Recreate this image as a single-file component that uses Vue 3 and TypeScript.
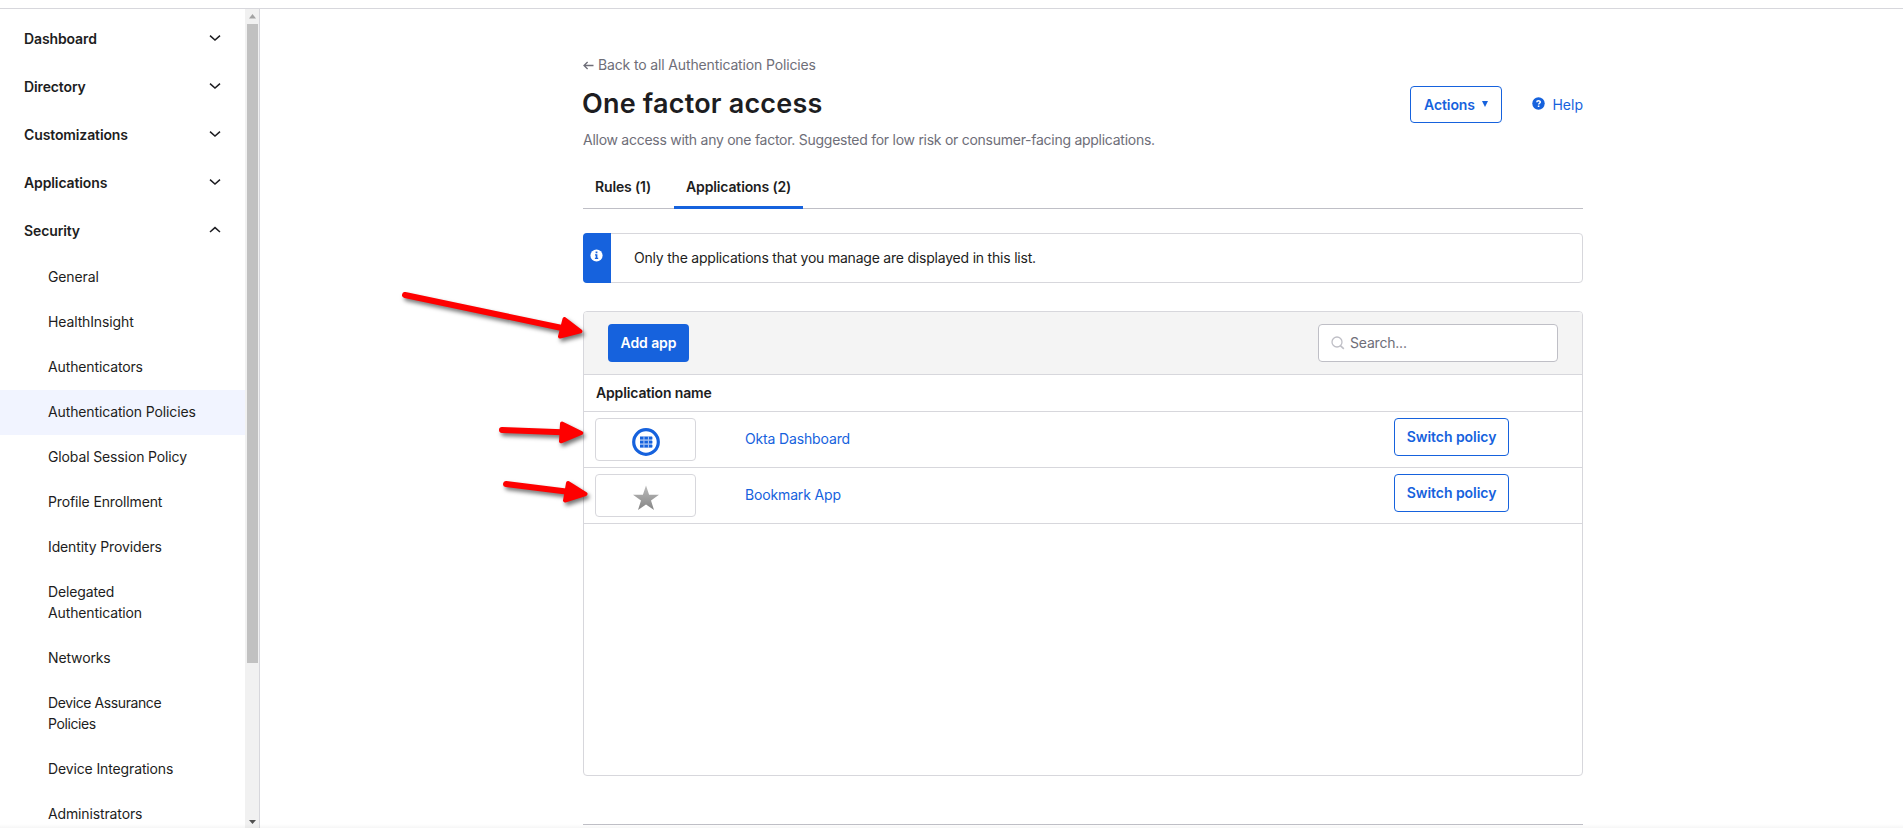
<script setup lang="ts">
interface Section { label: string; open?: boolean }
interface Item { label: string; active?: boolean; tight?: boolean }
interface AppRow { name: string; icon: 'dashboard' | 'star' }

const sections: Section[] = [
  { label: 'Dashboard' },
  { label: 'Directory' },
  { label: 'Customizations' },
  { label: 'Applications' },
  { label: 'Security', open: true },
]
const items: Item[] = [
  { label: 'General' },
  { label: 'HealthInsight' },
  { label: 'Authenticators' },
  { label: 'Authentication Policies', active: true },
  { label: 'Global Session Policy' },
  { label: 'Profile Enrollment' },
  { label: 'Identity Providers' },
  { label: 'Delegated Authentication' },
  { label: 'Networks' },
  { label: 'Device Assurance Policies', tight: true },
  { label: 'Device Integrations' },
  { label: 'Administrators' },
]
const apps: AppRow[] = [
  { name: 'Okta Dashboard', icon: 'dashboard' },
  { name: 'Bookmark App', icon: 'star' },
]
const cells: number[] = [0, 1, 2]
</script>

<template>
  <div class="page">
    <aside class="sidebar">
      <nav class="nav">
        <div v-for="s in sections" :key="s.label" class="section">
          <span>{{ s.label }}</span>
          <svg width="12" height="8" viewBox="0 0 12 8">
            <path :d="s.open ? 'M1 6 L6 1.6 L11 6' : 'M1 1.6 L6 6 L11 1.6'" fill="none" stroke="#1d1d21" stroke-width="1.5" />
          </svg>
        </div>
        <div v-for="i in items" :key="i.label" class="item" :class="{ active: i.active, tight: i.tight }">
          <span>{{ i.label }}</span>
        </div>
      </nav>
      <div class="scrollbar">
        <svg width="14" height="16" viewBox="0 0 14 16"><path d="M4 10.5 L7.5 6 L11 10.5Z" fill="#a3a3a3" /></svg>
        <div class="thumb"></div>
        <svg class="down" width="14" height="15" viewBox="0 0 14 15"><path d="M4 7 L11 7 L7.5 11Z" fill="#505050" /></svg>
      </div>
    </aside>

    <main class="content">
      <div class="back">
        <svg width="11" height="9" viewBox="0 0 11 9"><path d="M10.5 4.5 H1.2 M4.6 1 L1 4.5 L4.6 8" fill="none" stroke="#6e6e78" stroke-width="1.3" /></svg>
        <span>Back to all Authentication Policies</span>
      </div>
      <header class="head">
        <h1>One factor access</h1>
        <div class="tools">
          <button class="btn outline actions">
            <span>Actions</span>
            <svg width="6" height="6" viewBox="0 0 6 6"><path d="M0 0 H6 L3 6Z" fill="#1662dd" /></svg>
          </button>
          <a class="help">
            <svg width="13" height="13" viewBox="0 0 13 13">
              <circle cx="6.5" cy="6.5" r="6.2" fill="#1662dd" />
              <path d="M4.8 5.2 C4.8 3.2 8.3 3.2 8.3 5.1 C8.3 6.3 6.6 6.2 6.6 7.6" fill="none" stroke="#fff" stroke-width="1.5" />
              <rect x="5.8" y="8.5" width="1.6" height="1.5" fill="#fff" />
            </svg>
            <span>Help</span>
          </a>
        </div>
      </header>
      <p class="desc">Allow access with any one factor. Suggested for low risk or consumer-facing applications.</p>

      <div class="tabs">
        <div class="tab rules"><span>Rules (1)</span></div>
        <div class="tab selected"><span>Applications (2)</span></div>
      </div>

      <div class="info">
        <div class="info-mark">
          <svg width="13" height="13" viewBox="0 0 13 13">
            <circle cx="6.5" cy="6.5" r="6.1" fill="#fff" />
            <path d="M5.6 2.6 h1.8 v1.6 h-1.8z M5 5.2 h2.4 v3.6 h.8 v1.2 h-3.3 v-1.2 h.8 v-2.4 h-.7z" fill="#1662dd" />
          </svg>
        </div>
        <span class="info-text">Only the applications that you manage are displayed in this list.</span>
      </div>

      <section class="panel">
        <div class="toolbar">
          <button class="btn primary"><span>Add app</span></button>
          <div class="search">
            <svg width="14" height="14" viewBox="0 0 14 14"><circle cx="6" cy="6" r="5" fill="none" stroke="#bfbfc6" stroke-width="1.3" /><path d="M9.4 9.6 L12.8 12.8" stroke="#bfbfc6" stroke-width="1.6" /></svg>
            <span>Search...</span>
          </div>
        </div>
        <div class="thead"><span>Application name</span></div>
        <div v-for="a in apps" :key="a.name" class="row">
          <div class="logo">
            <svg v-if="a.icon === 'dashboard'" width="28" height="28" viewBox="0 0 28 28">
              <circle cx="14" cy="14" r="12.3" fill="none" stroke="#1662dd" stroke-width="3.2" />
              <rect x="8" y="8" width="12" height="12" fill="#a5c2f2" />
              <template v-for="y in cells" :key="y">
                <rect v-for="x in cells" :key="x" :x="8 + x * 4.5" :y="8.8 + y * 4" width="3.4" height="2.6" fill="#1662dd" />
              </template>
            </svg>
            <svg v-else width="28" height="28" viewBox="0 0 28 28">
              <defs><linearGradient id="silver" x1="0" y1="0" x2="0" y2="1"><stop offset="0" stop-color="#bcbcbc" /><stop offset="1" stop-color="#858585" /></linearGradient></defs>
              <path d="M14 1.5 L17.1 10.8 L27 10.8 L19 16.6 L22 26 L14 20.4 L6 26 L9 16.6 L1 10.8 L10.9 10.8Z" fill="url(#silver)" />
            </svg>
          </div>
          <a class="link"><span>{{ a.name }}</span></a>
          <button class="btn outline switch"><span>Switch policy</span></button>
        </div>
      </section>
      <div class="footer-line"></div>
    </main>

    <svg class="arrows" width="220" height="260" viewBox="390 270 220 260">
      <g fill="#fe0000" stroke="#fe0000" stroke-linecap="round" stroke-linejoin="round">
        <path d="M405 295 L562 328" stroke-width="6" />
        <path d="M564.5 319 L580.5 331.3 L560 336.5Z" stroke-width="4" />
        <path d="M502 430 L562 432.3" stroke-width="6" />
        <path d="M562 423.5 L581.3 433 L561 441.3Z" stroke-width="4" />
        <path d="M506 484 L566 491.5" stroke-width="6" />
        <path d="M568 483 L585.5 494 L565 500.5Z" stroke-width="4" />
      </g>
    </svg>
  </div>
</template>

<style>
body { background: #fff; overflow: hidden; }
</style>

<style scoped>
* { box-sizing: border-box; }
.page { position: relative; display: flex; width: 1903px; height: 828px; padding-top: 8px; overflow: hidden; font: 400 14px/21px Inter, "Noto Sans", sans-serif; color: #1d1d21; }
.page::before { content: ''; position: absolute; top: 8px; left: 0; right: 0; height: 1px; background: #d7d7dc; z-index: 2; }
.page::after { content: ''; position: absolute; bottom: 0; left: 0; right: 0; height: 4px; background: linear-gradient(rgba(0, 0, 0, 0), rgba(0, 0, 0, 0.035)); }
.sidebar { display: flex; flex: none; width: 260px; height: 820px; border-right: 1px solid #d7d7dc; overflow: hidden; }
.nav { width: 245px; padding-top: 7px; }
.section { display: flex; align-items: center; justify-content: space-between; height: 48px; padding: 0 24px; font-weight: 600; letter-spacing: -0.12px; }
.section span { padding-bottom: 2px; }
.section svg { margin-top: -3px; }
.item { padding: 11px 0 13px 48px; letter-spacing: -0.13px; }
.item span { display: block; width: 150px; }
.item.active { background: #f1f4ff; white-space: nowrap; }
.item.tight { letter-spacing: -0.4px; }
.scrollbar { display: flex; flex-direction: column; width: 14px; background: #f1f1f1; }
.thumb { width: 11px; height: 639px; margin-left: 2px; background: #c1c1c1; }
.down { margin-top: auto; }
.content { width: 1000px; margin-left: 323px; }
.back { display: flex; align-items: center; gap: 4px; margin-top: 46px; height: 21px; color: #6e6e78; letter-spacing: -0.14px; }
.back svg { margin-top: 1px; }
.head { display: flex; justify-content: space-between; height: 50px; margin-top: 3px; }
h1 { margin: 9px 0 0 -1px; font-size: 27px; line-height: 34px; font-weight: 600; letter-spacing: 0.2px; }
.tools { display: flex; margin-top: 8px; }
.btn { display: flex; align-items: center; justify-content: center; height: 38px; border-radius: 4px; font: 600 14px/21px Inter, "Noto Sans", sans-serif; padding: 0; white-space: nowrap; }
.btn span { padding-bottom: 1px; }
.outline { border: 1px solid #1662dd; background: #fff; color: #1662dd; }
.primary { border: 0; width: 81px; background: #1662dd; color: #fff; letter-spacing: -0.1px; }
.actions { width: 92px; height: 37px; gap: 7px; letter-spacing: -0.1px; }
.actions svg { margin-top: -2px; }
.help { display: flex; align-items: center; width: 51px; margin-left: 30px; height: 37px; justify-content: space-between; color: #1662dd; }
.help svg { margin-top: -2px; }
.desc { margin: 1px 0 0; color: #6e6e78; height: 22px; white-space: nowrap; letter-spacing: -0.267px; }
.tabs { display: flex; height: 41px; margin-top: 17px; border-bottom: 1px solid #bfbfc6; font-weight: 600; gap: 12px; letter-spacing: -0.14px; }
.tab { padding: 8px 12px 0; white-space: nowrap; height: 41px; }
.rules { width: 79px; }
.selected { width: 129px; border-bottom: 3px solid #1662dd; }
.info { display: flex; height: 50px; margin-top: 24px; border: 1px solid #d7d7dc; border-radius: 4px; }
.info-mark { width: 28px; margin: -1px 0 -1px -1px; padding: 16px 0 0 7px; background: #1662dd; border-radius: 4px 0 0 4px; }
.info-mark svg { display: block; }
.info-text { margin: 13px 0 0 23px; white-space: nowrap; letter-spacing: -0.21px; }
.panel { height: 465px; margin-top: 28px; border: 1px solid #d7d7dc; border-radius: 4px; overflow: hidden; }
.toolbar { display: flex; align-items: center; justify-content: space-between; height: 63px; padding: 0 24px; background: #f4f4f4; border-bottom: 1px solid #d7d7dc; }
.search { display: flex; align-items: center; gap: 5px; width: 240px; height: 38px; padding-left: 12px; border: 1px solid #bfbfc6; border-radius: 4px; background: #fff; color: #6e6e78; letter-spacing: -0.2px; }
.search span { padding-bottom: 1px; }
.thead { height: 37px; padding: 7px 12px; border-bottom: 1px solid #d7d7dc; font-weight: 600; letter-spacing: -0.15px; }
.row { display: flex; height: 56px; border-bottom: 1px solid #d7d7dc; padding-top: 6px; }
.logo { flex: none; width: 101px; height: 43px; margin-left: 11px; padding: 9px 0 0 36px; border: 1px solid #d7d7dc; border-radius: 4px; }
.logo svg { display: block; }
.link { margin: 10px 0 0 49px; color: #1662dd; width: 649px; white-space: nowrap; letter-spacing: -0.15px; }
.switch { width: 115px; letter-spacing: -0.05px; }
.footer-line { height: 1px; margin-top: 48px; background: #bfbfc6; }
.arrows { position: absolute; left: 390px; top: 270px; filter: drop-shadow(2px 3px 2px rgba(0, 0, 0, 0.55)); }
</style>
